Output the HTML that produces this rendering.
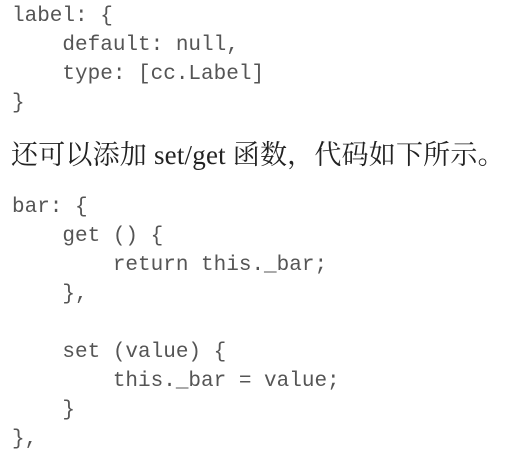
<!DOCTYPE html>
<html><head><meta charset="utf-8"><style>
html,body{margin:0;padding:0;background:#fff;width:505px;height:465px;overflow:hidden}
.c{position:absolute;left:12px;font-family:"Liberation Mono",monospace;font-size:21px;line-height:29px;height:29px;color:#555;white-space:pre}
.t{position:absolute;left:11px;top:138px;font-family:"Liberation Serif","Noto Serif CJK SC",serif;font-size:27px;line-height:34px;color:#222;white-space:nowrap;letter-spacing:0.2px}
</style></head><body>
<div class="c" style="top:2px">label: {</div>
<div class="c" style="top:31px">    default: null,</div>
<div class="c" style="top:60px">    type: [cc.Label]</div>
<div class="c" style="top:89px">}</div>
<div class="t">还可以添加 set/get 函数，代码如下所示。</div>
<div class="c" style="top:193px">bar: {</div>
<div class="c" style="top:222px">    get () {</div>
<div class="c" style="top:251px">        return this._bar;</div>
<div class="c" style="top:280px">    },</div>
<div class="c" style="top:338px">    set (value) {</div>
<div class="c" style="top:367px">        this._bar = value;</div>
<div class="c" style="top:396px">    }</div>
<div class="c" style="top:425px">},</div>
</body></html>
